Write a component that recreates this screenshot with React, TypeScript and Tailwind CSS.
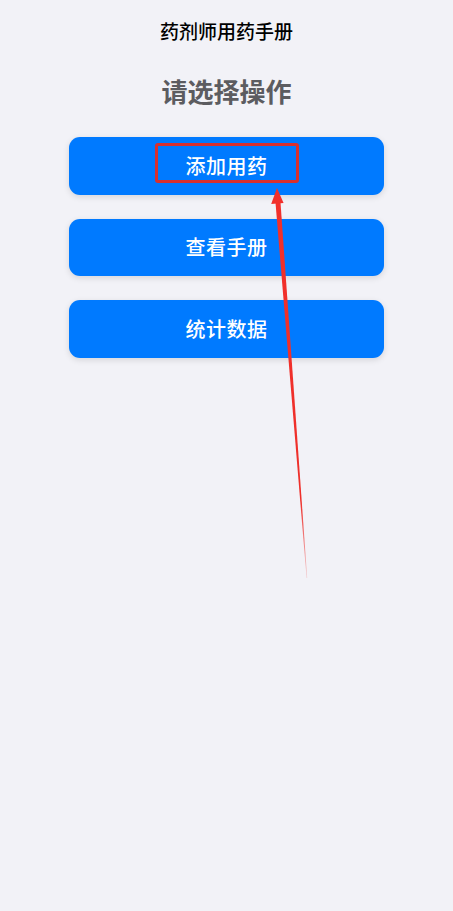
// Pharmacist handbook – home menu
import React from 'react'

const cjk = { fontFamily: '"Noto Sans CJK SC", "Noto Sans", sans-serif' }

const actions = ['添加用药', '查看手册', '统计数据']

function Arrow() {
  // annotation arrow pointing at the first button
  return (
    <svg className="pointer-events-none absolute inset-0" width="453" height="911" viewBox="0 0 453 911">
      <defs>
        <linearGradient id="shaft" x1="277" y1="190" x2="307" y2="578" gradientUnits="userSpaceOnUse">
          <stop offset="0" stopColor="#f2302b" />
          <stop offset="0.8" stopColor="#ee2f2a" />
          <stop offset="1" stopColor="#ee2f2a" stopOpacity="0.2" />
        </linearGradient>
      </defs>
      <polygon points="280.4,201 275.4,201.4 306.6,578 307.2,578" fill="url(#shaft)" />
      <polygon points="277,188 283.6,203 271.2,204" fill="#f2302b" />
    </svg>
  )
}

export default function App() {
  return (
    <div className="relative min-h-[911px] w-full overflow-hidden bg-[#f2f2f7]" style={cjk}>
      <div className="flex flex-col items-center">
        {/* Header */}
        <h1 className="mt-[18px] text-[19px] leading-[26px] font-medium text-black">药剂师用药手册</h1>
        <h2 className="mt-[30px] text-[26px] leading-[34px] font-bold text-[#5c5c60]">请选择操作</h2>

        {/* Actions */}
        <div className="mt-[29px] flex w-[315px] flex-col gap-[24px]">
          {actions.map((label, i) => (
            <button
              key={label}
              className="relative flex h-[57.5px] items-center justify-center rounded-[11px] bg-[#007aff] text-[20px] font-medium tracking-[0.5px] text-white shadow-[0_2px_6px_rgba(0,0,0,0.12)]"
            >
              {label}
              {i === 0 && (
                <span className="absolute top-[6px] left-[86px] h-[40px] w-[144px] rounded-[3px] border-[3px] border-[#d8302e]" />
              )}
            </button>
          ))}
        </div>
      </div>
      <Arrow />
    </div>
  )
}
